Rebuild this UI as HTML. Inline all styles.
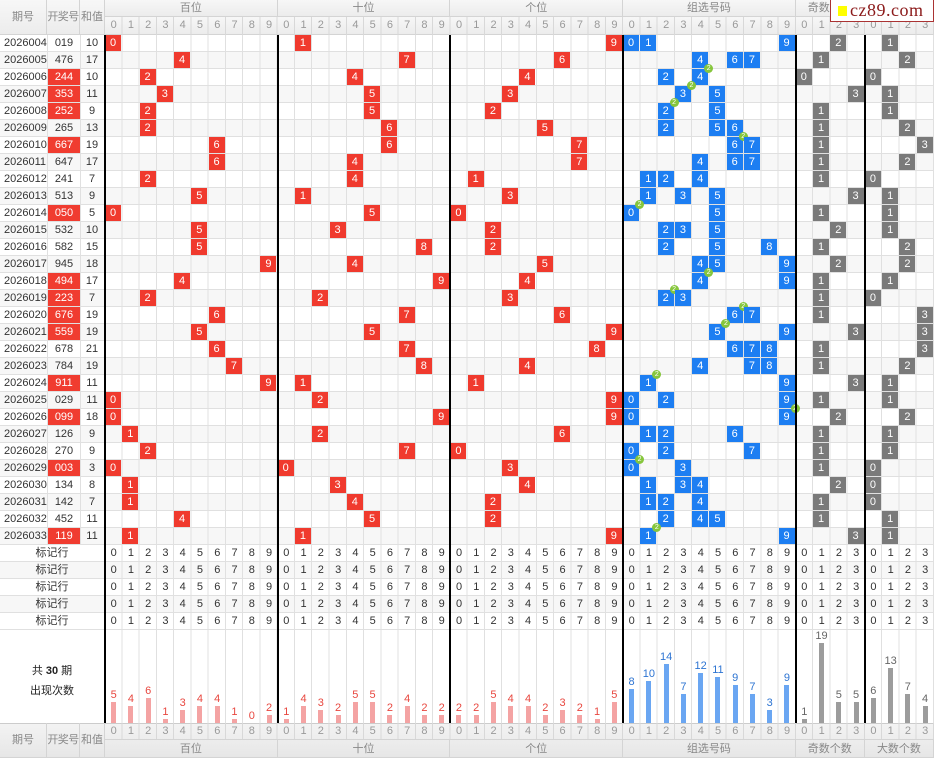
<!DOCTYPE html>
<html><head><meta charset="utf-8">
<style>
*{margin:0;padding:0;box-sizing:border-box}
html,body{width:934px;height:758px;overflow:hidden}
body{position:relative;background:#fff;font-family:"Liberation Sans","Noto Sans CJK SC",sans-serif;font-size:11px;color:#333}
.a{position:absolute}
.hd{background:linear-gradient(#f7f7f7,#ececec);color:#888;text-align:center;border-right:1px solid #d4d4d4;border-bottom:1px solid #d4d4d4;white-space:nowrap;overflow:hidden}
.k{letter-spacing:-0.6px}
.dg{position:absolute;left:105px;white-space:nowrap;letter-spacing:11.15px;padding-left:5.6px;font-size:11px;height:17px;line-height:17px}
.row{position:absolute;left:0;width:934px;height:17px;line-height:17px}
.row span{position:absolute;top:0;height:17px}
.p{left:4px}
.n{left:48px;width:32px;text-align:center}
.n.h{background:#f03c30;color:#fff;top:0;height:16px!important}
.s{left:80px;width:24px;text-align:center}
.row b{position:absolute;top:0;left:calc(105px + var(--c)*17.27px);width:16px;height:16px;color:#fff;text-align:center;line-height:17px;font-weight:normal;font-size:11px}
.r{background:#f03a2e}.u{background:#1d7ef2}.g{background:#7a7a7a}
.d{position:absolute;right:-5px;top:-5px;width:9px;height:9px;border-radius:50%;background:#86c63c;color:#fff;font-size:7px;line-height:9px;font-style:normal;text-align:center}
.bk{position:absolute;top:35px;height:688px;width:2px;background:#000}
.st{position:absolute;left:105px;top:630px;height:93px;display:flex;align-items:flex-end}
.st div{width:17.27px;display:flex;flex-direction:column;align-items:center;justify-content:flex-end;height:93px}
.st i{font-style:normal;font-size:11px;line-height:12px;margin-bottom:1px}
.st b{display:block;width:5px}
.R i{color:#e8473f}.R b{background:#f4a3a3}
.U i{color:#2d74d2}.U b{background:#6aa6f2}
.G i{color:#666}.G b{background:#9c9c9c}
.ml{position:absolute;left:0;width:104px;text-align:center;height:17px;line-height:17px}
</style></head><body>
<div class="a" style="left:0;top:35px;width:934px;height:595px;background:repeating-linear-gradient(#fff 0 17px,#f7f7f7 17px 34px)"></div>
<div class="a" style="left:0;top:35px;width:934px;height:595px;background:repeating-linear-gradient(to bottom,transparent 0 16px,#e0e0e0 16px 17px)"></div>
<div class="a" style="left:105px;top:35px;width:829px;height:688px;background:repeating-linear-gradient(to right,transparent 0 16.27px,#e0e0e0 16.27px 17.27px)"></div>
<div class="a" style="left:47px;top:35px;width:1px;height:510px;background:#e0e0e0"></div>
<div class="a" style="left:80px;top:35px;width:1px;height:510px;background:#e0e0e0"></div>

<div class="a hd" style="left:0;top:0;width:47px;height:35px;line-height:35px">期号</div>
<div class="a hd k" style="left:47px;top:0;width:33px;height:35px;line-height:35px">开奖号</div>
<div class="a hd" style="left:80px;top:0;width:25px;height:35px;line-height:35px">和值</div>
<div class="a hd" style="left:105px;top:0;width:172.7px;height:17px;line-height:17px">百位</div>
<div class="a hd" style="left:277.7px;top:0;width:172.7px;height:17px;line-height:17px">十位</div>
<div class="a hd" style="left:450.4px;top:0;width:172.7px;height:17px;line-height:17px">个位</div>
<div class="a hd" style="left:623.1px;top:0;width:172.7px;height:17px;line-height:17px">组选号码</div>
<div class="a hd" style="left:795.8px;top:0;width:69px;height:17px;line-height:17px">奇数个数</div>
<div class="a hd" style="left:864.9px;top:0;width:69.1px;height:17px;line-height:17px">大数个数</div>
<div class="a" style="left:105px;top:17px;width:829px;height:18px;background:linear-gradient(#f7f7f7,#ececec);border-bottom:1px solid #d4d4d4"></div>
<div class="a" style="left:105px;top:17px;width:829px;height:18px;background:repeating-linear-gradient(to right,transparent 0 16.27px,#d8d8d8 16.27px 17.27px)"></div>
<div class="dg" style="top:17px;color:#999">012345678901234567890123456789012345678901230123</div>

<div class="a" style="left:830px;top:0;width:104px;height:22px;background:#fff;border:1px solid #a33;border-top:none"></div>
<div class="a" style="left:838px;top:6px;width:9px;height:10px;background:#ffff00"></div>
<div class="a" style="left:850px;top:0;height:22px;line-height:21px;font-family:'Liberation Serif',serif;font-size:18px;color:#8b1a1a;letter-spacing:.5px">cz89.com</div>

<div class="row" style="top:35px"><span class="p">2026004</span><span class="n">019</span><span class="s">10</span><b class="r" style="--c:0">0</b><b class="r" style="--c:11">1</b><b class="r" style="--c:29">9</b><b class="u" style="--c:30">0</b><b class="u" style="--c:31">1</b><b class="u" style="--c:39">9</b><b class="g" style="--c:42">2</b><b class="g" style="--c:45">1</b></div>
<div class="row" style="top:52px"><span class="p">2026005</span><span class="n">476</span><span class="s">17</span><b class="r" style="--c:4">4</b><b class="r" style="--c:17">7</b><b class="r" style="--c:26">6</b><b class="u" style="--c:34">4</b><b class="u" style="--c:36">6</b><b class="u" style="--c:37">7</b><b class="g" style="--c:41">1</b><b class="g" style="--c:46">2</b></div>
<div class="row" style="top:69px"><span class="p">2026006</span><span class="n h">244</span><span class="s">10</span><b class="r" style="--c:2">2</b><b class="r" style="--c:14">4</b><b class="r" style="--c:24">4</b><b class="u" style="--c:32">2</b><b class="u" style="--c:34">4<i class="d">2</i></b><b class="g" style="--c:40">0</b><b class="g" style="--c:44">0</b></div>
<div class="row" style="top:86px"><span class="p">2026007</span><span class="n h">353</span><span class="s">11</span><b class="r" style="--c:3">3</b><b class="r" style="--c:15">5</b><b class="r" style="--c:23">3</b><b class="u" style="--c:33">3<i class="d">2</i></b><b class="u" style="--c:35">5</b><b class="g" style="--c:43">3</b><b class="g" style="--c:45">1</b></div>
<div class="row" style="top:103px"><span class="p">2026008</span><span class="n h">252</span><span class="s">9</span><b class="r" style="--c:2">2</b><b class="r" style="--c:15">5</b><b class="r" style="--c:22">2</b><b class="u" style="--c:32">2<i class="d">2</i></b><b class="u" style="--c:35">5</b><b class="g" style="--c:41">1</b><b class="g" style="--c:45">1</b></div>
<div class="row" style="top:120px"><span class="p">2026009</span><span class="n">265</span><span class="s">13</span><b class="r" style="--c:2">2</b><b class="r" style="--c:16">6</b><b class="r" style="--c:25">5</b><b class="u" style="--c:32">2</b><b class="u" style="--c:35">5</b><b class="u" style="--c:36">6</b><b class="g" style="--c:41">1</b><b class="g" style="--c:46">2</b></div>
<div class="row" style="top:137px"><span class="p">2026010</span><span class="n h">667</span><span class="s">19</span><b class="r" style="--c:6">6</b><b class="r" style="--c:16">6</b><b class="r" style="--c:27">7</b><b class="u" style="--c:36">6<i class="d">2</i></b><b class="u" style="--c:37">7</b><b class="g" style="--c:41">1</b><b class="g" style="--c:47">3</b></div>
<div class="row" style="top:154px"><span class="p">2026011</span><span class="n">647</span><span class="s">17</span><b class="r" style="--c:6">6</b><b class="r" style="--c:14">4</b><b class="r" style="--c:27">7</b><b class="u" style="--c:34">4</b><b class="u" style="--c:36">6</b><b class="u" style="--c:37">7</b><b class="g" style="--c:41">1</b><b class="g" style="--c:46">2</b></div>
<div class="row" style="top:171px"><span class="p">2026012</span><span class="n">241</span><span class="s">7</span><b class="r" style="--c:2">2</b><b class="r" style="--c:14">4</b><b class="r" style="--c:21">1</b><b class="u" style="--c:31">1</b><b class="u" style="--c:32">2</b><b class="u" style="--c:34">4</b><b class="g" style="--c:41">1</b><b class="g" style="--c:44">0</b></div>
<div class="row" style="top:188px"><span class="p">2026013</span><span class="n">513</span><span class="s">9</span><b class="r" style="--c:5">5</b><b class="r" style="--c:11">1</b><b class="r" style="--c:23">3</b><b class="u" style="--c:31">1</b><b class="u" style="--c:33">3</b><b class="u" style="--c:35">5</b><b class="g" style="--c:43">3</b><b class="g" style="--c:45">1</b></div>
<div class="row" style="top:205px"><span class="p">2026014</span><span class="n h">050</span><span class="s">5</span><b class="r" style="--c:0">0</b><b class="r" style="--c:15">5</b><b class="r" style="--c:20">0</b><b class="u" style="--c:30">0<i class="d">2</i></b><b class="u" style="--c:35">5</b><b class="g" style="--c:41">1</b><b class="g" style="--c:45">1</b></div>
<div class="row" style="top:222px"><span class="p">2026015</span><span class="n">532</span><span class="s">10</span><b class="r" style="--c:5">5</b><b class="r" style="--c:13">3</b><b class="r" style="--c:22">2</b><b class="u" style="--c:32">2</b><b class="u" style="--c:33">3</b><b class="u" style="--c:35">5</b><b class="g" style="--c:42">2</b><b class="g" style="--c:45">1</b></div>
<div class="row" style="top:239px"><span class="p">2026016</span><span class="n">582</span><span class="s">15</span><b class="r" style="--c:5">5</b><b class="r" style="--c:18">8</b><b class="r" style="--c:22">2</b><b class="u" style="--c:32">2</b><b class="u" style="--c:35">5</b><b class="u" style="--c:38">8</b><b class="g" style="--c:41">1</b><b class="g" style="--c:46">2</b></div>
<div class="row" style="top:256px"><span class="p">2026017</span><span class="n">945</span><span class="s">18</span><b class="r" style="--c:9">9</b><b class="r" style="--c:14">4</b><b class="r" style="--c:25">5</b><b class="u" style="--c:34">4</b><b class="u" style="--c:35">5</b><b class="u" style="--c:39">9</b><b class="g" style="--c:42">2</b><b class="g" style="--c:46">2</b></div>
<div class="row" style="top:273px"><span class="p">2026018</span><span class="n h">494</span><span class="s">17</span><b class="r" style="--c:4">4</b><b class="r" style="--c:19">9</b><b class="r" style="--c:24">4</b><b class="u" style="--c:34">4<i class="d">2</i></b><b class="u" style="--c:39">9</b><b class="g" style="--c:41">1</b><b class="g" style="--c:45">1</b></div>
<div class="row" style="top:290px"><span class="p">2026019</span><span class="n h">223</span><span class="s">7</span><b class="r" style="--c:2">2</b><b class="r" style="--c:12">2</b><b class="r" style="--c:23">3</b><b class="u" style="--c:32">2<i class="d">2</i></b><b class="u" style="--c:33">3</b><b class="g" style="--c:41">1</b><b class="g" style="--c:44">0</b></div>
<div class="row" style="top:307px"><span class="p">2026020</span><span class="n h">676</span><span class="s">19</span><b class="r" style="--c:6">6</b><b class="r" style="--c:17">7</b><b class="r" style="--c:26">6</b><b class="u" style="--c:36">6<i class="d">2</i></b><b class="u" style="--c:37">7</b><b class="g" style="--c:41">1</b><b class="g" style="--c:47">3</b></div>
<div class="row" style="top:324px"><span class="p">2026021</span><span class="n h">559</span><span class="s">19</span><b class="r" style="--c:5">5</b><b class="r" style="--c:15">5</b><b class="r" style="--c:29">9</b><b class="u" style="--c:35">5<i class="d">2</i></b><b class="u" style="--c:39">9</b><b class="g" style="--c:43">3</b><b class="g" style="--c:47">3</b></div>
<div class="row" style="top:341px"><span class="p">2026022</span><span class="n">678</span><span class="s">21</span><b class="r" style="--c:6">6</b><b class="r" style="--c:17">7</b><b class="r" style="--c:28">8</b><b class="u" style="--c:36">6</b><b class="u" style="--c:37">7</b><b class="u" style="--c:38">8</b><b class="g" style="--c:41">1</b><b class="g" style="--c:47">3</b></div>
<div class="row" style="top:358px"><span class="p">2026023</span><span class="n">784</span><span class="s">19</span><b class="r" style="--c:7">7</b><b class="r" style="--c:18">8</b><b class="r" style="--c:24">4</b><b class="u" style="--c:34">4</b><b class="u" style="--c:37">7</b><b class="u" style="--c:38">8</b><b class="g" style="--c:41">1</b><b class="g" style="--c:46">2</b></div>
<div class="row" style="top:375px"><span class="p">2026024</span><span class="n h">911</span><span class="s">11</span><b class="r" style="--c:9">9</b><b class="r" style="--c:11">1</b><b class="r" style="--c:21">1</b><b class="u" style="--c:31">1<i class="d">2</i></b><b class="u" style="--c:39">9</b><b class="g" style="--c:43">3</b><b class="g" style="--c:45">1</b></div>
<div class="row" style="top:392px"><span class="p">2026025</span><span class="n">029</span><span class="s">11</span><b class="r" style="--c:0">0</b><b class="r" style="--c:12">2</b><b class="r" style="--c:29">9</b><b class="u" style="--c:30">0</b><b class="u" style="--c:32">2</b><b class="u" style="--c:39">9</b><b class="g" style="--c:41">1</b><b class="g" style="--c:45">1</b></div>
<div class="row" style="top:409px"><span class="p">2026026</span><span class="n h">099</span><span class="s">18</span><b class="r" style="--c:0">0</b><b class="r" style="--c:19">9</b><b class="r" style="--c:29">9</b><b class="u" style="--c:30">0</b><b class="u" style="--c:39">9<i class="d">2</i></b><b class="g" style="--c:42">2</b><b class="g" style="--c:46">2</b></div>
<div class="row" style="top:426px"><span class="p">2026027</span><span class="n">126</span><span class="s">9</span><b class="r" style="--c:1">1</b><b class="r" style="--c:12">2</b><b class="r" style="--c:26">6</b><b class="u" style="--c:31">1</b><b class="u" style="--c:32">2</b><b class="u" style="--c:36">6</b><b class="g" style="--c:41">1</b><b class="g" style="--c:45">1</b></div>
<div class="row" style="top:443px"><span class="p">2026028</span><span class="n">270</span><span class="s">9</span><b class="r" style="--c:2">2</b><b class="r" style="--c:17">7</b><b class="r" style="--c:20">0</b><b class="u" style="--c:30">0</b><b class="u" style="--c:32">2</b><b class="u" style="--c:37">7</b><b class="g" style="--c:41">1</b><b class="g" style="--c:45">1</b></div>
<div class="row" style="top:460px"><span class="p">2026029</span><span class="n h">003</span><span class="s">3</span><b class="r" style="--c:0">0</b><b class="r" style="--c:10">0</b><b class="r" style="--c:23">3</b><b class="u" style="--c:30">0<i class="d">2</i></b><b class="u" style="--c:33">3</b><b class="g" style="--c:41">1</b><b class="g" style="--c:44">0</b></div>
<div class="row" style="top:477px"><span class="p">2026030</span><span class="n">134</span><span class="s">8</span><b class="r" style="--c:1">1</b><b class="r" style="--c:13">3</b><b class="r" style="--c:24">4</b><b class="u" style="--c:31">1</b><b class="u" style="--c:33">3</b><b class="u" style="--c:34">4</b><b class="g" style="--c:42">2</b><b class="g" style="--c:44">0</b></div>
<div class="row" style="top:494px"><span class="p">2026031</span><span class="n">142</span><span class="s">7</span><b class="r" style="--c:1">1</b><b class="r" style="--c:14">4</b><b class="r" style="--c:22">2</b><b class="u" style="--c:31">1</b><b class="u" style="--c:32">2</b><b class="u" style="--c:34">4</b><b class="g" style="--c:41">1</b><b class="g" style="--c:44">0</b></div>
<div class="row" style="top:511px"><span class="p">2026032</span><span class="n">452</span><span class="s">11</span><b class="r" style="--c:4">4</b><b class="r" style="--c:15">5</b><b class="r" style="--c:22">2</b><b class="u" style="--c:32">2</b><b class="u" style="--c:34">4</b><b class="u" style="--c:35">5</b><b class="g" style="--c:41">1</b><b class="g" style="--c:45">1</b></div>
<div class="row" style="top:528px"><span class="p">2026033</span><span class="n h">119</span><span class="s">11</span><b class="r" style="--c:1">1</b><b class="r" style="--c:11">1</b><b class="r" style="--c:29">9</b><b class="u" style="--c:31">1<i class="d">2</i></b><b class="u" style="--c:39">9</b><b class="g" style="--c:43">3</b><b class="g" style="--c:45">1</b></div>

<div class="ml" style="top:545px">标记行</div>
<div class="ml" style="top:562px">标记行</div>
<div class="ml" style="top:579px">标记行</div>
<div class="ml" style="top:596px">标记行</div>
<div class="ml" style="top:613px">标记行</div>
<div class="dg" style="top:545px">012345678901234567890123456789012345678901230123</div>
<div class="dg" style="top:562px">012345678901234567890123456789012345678901230123</div>
<div class="dg" style="top:579px">012345678901234567890123456789012345678901230123</div>
<div class="dg" style="top:596px">012345678901234567890123456789012345678901230123</div>
<div class="dg" style="top:613px">012345678901234567890123456789012345678901230123</div>

<div class="a" style="left:0;top:630px;width:104px;text-align:center;padding-top:31px;line-height:20px;color:#222">共 <b>30</b> 期<br>出现次数</div>
<div class="st">
<div class="R"><i>5</i><b style="height:21px"></b></div><div class="R"><i>4</i><b style="height:17px"></b></div><div class="R"><i>6</i><b style="height:25px"></b></div><div class="R"><i>1</i><b style="height:4px"></b></div><div class="R"><i>3</i><b style="height:13px"></b></div><div class="R"><i>4</i><b style="height:17px"></b></div><div class="R"><i>4</i><b style="height:17px"></b></div><div class="R"><i>1</i><b style="height:4px"></b></div><div class="R"><i>0</i><b style="height:0"></b></div><div class="R"><i>2</i><b style="height:8px"></b></div>
<div class="R"><i>1</i><b style="height:4px"></b></div><div class="R"><i>4</i><b style="height:17px"></b></div><div class="R"><i>3</i><b style="height:13px"></b></div><div class="R"><i>2</i><b style="height:8px"></b></div><div class="R"><i>5</i><b style="height:21px"></b></div><div class="R"><i>5</i><b style="height:21px"></b></div><div class="R"><i>2</i><b style="height:8px"></b></div><div class="R"><i>4</i><b style="height:17px"></b></div><div class="R"><i>2</i><b style="height:8px"></b></div><div class="R"><i>2</i><b style="height:8px"></b></div>
<div class="R"><i>2</i><b style="height:8px"></b></div><div class="R"><i>2</i><b style="height:8px"></b></div><div class="R"><i>5</i><b style="height:21px"></b></div><div class="R"><i>4</i><b style="height:17px"></b></div><div class="R"><i>4</i><b style="height:17px"></b></div><div class="R"><i>2</i><b style="height:8px"></b></div><div class="R"><i>3</i><b style="height:13px"></b></div><div class="R"><i>2</i><b style="height:8px"></b></div><div class="R"><i>1</i><b style="height:4px"></b></div><div class="R"><i>5</i><b style="height:21px"></b></div>
<div class="U"><i>8</i><b style="height:34px"></b></div><div class="U"><i>10</i><b style="height:42px"></b></div><div class="U"><i>14</i><b style="height:59px"></b></div><div class="U"><i>7</i><b style="height:29px"></b></div><div class="U"><i>12</i><b style="height:50px"></b></div><div class="U"><i>11</i><b style="height:46px"></b></div><div class="U"><i>9</i><b style="height:38px"></b></div><div class="U"><i>7</i><b style="height:29px"></b></div><div class="U"><i>3</i><b style="height:13px"></b></div><div class="U"><i>9</i><b style="height:38px"></b></div>
<div class="G"><i>1</i><b style="height:4px"></b></div><div class="G"><i>19</i><b style="height:80px"></b></div><div class="G"><i>5</i><b style="height:21px"></b></div><div class="G"><i>5</i><b style="height:21px"></b></div>
<div class="G"><i>6</i><b style="height:25px"></b></div><div class="G"><i>13</i><b style="height:55px"></b></div><div class="G"><i>7</i><b style="height:29px"></b></div><div class="G"><i>4</i><b style="height:17px"></b></div>
</div>

<div class="bk" style="left:103.5px"></div>
<div class="bk" style="left:276.5px"></div>
<div class="bk" style="left:449.3px"></div>
<div class="bk" style="left:622px"></div>
<div class="bk" style="left:794.7px"></div>
<div class="bk" style="left:863.8px"></div>

<div class="a" style="left:0;top:723px;width:934px;height:35px;background:linear-gradient(#f3f3f3,#e6e6e6);border-top:1px solid #ccc"></div>
<div class="a hd" style="left:0;top:723px;width:47px;height:35px;line-height:35px;background:none">期号</div>
<div class="a hd k" style="left:47px;top:723px;width:33px;height:35px;line-height:35px;background:none">开奖号</div>
<div class="a hd" style="left:80px;top:723px;width:25px;height:35px;line-height:35px;background:none">和值</div>
<div class="a" style="left:105px;top:723px;width:829px;height:17px;background:repeating-linear-gradient(to right,transparent 0 16.27px,#d8d8d8 16.27px 17.27px);border-bottom:1px solid #d4d4d4"></div>
<div class="dg" style="top:723px;color:#999">012345678901234567890123456789012345678901230123</div>
<div class="a hd" style="left:105px;top:740px;width:172.7px;height:18px;line-height:18px;background:none">百位</div>
<div class="a hd" style="left:277.7px;top:740px;width:172.7px;height:18px;line-height:18px;background:none">十位</div>
<div class="a hd" style="left:450.4px;top:740px;width:172.7px;height:18px;line-height:18px;background:none">个位</div>
<div class="a hd" style="left:623.1px;top:740px;width:172.7px;height:18px;line-height:18px;background:none">组选号码</div>
<div class="a hd" style="left:795.8px;top:740px;width:69px;height:18px;line-height:18px;background:none">奇数个数</div>
<div class="a hd" style="left:864.9px;top:740px;width:69.1px;height:18px;line-height:18px;background:none">大数个数</div>
</body></html>
